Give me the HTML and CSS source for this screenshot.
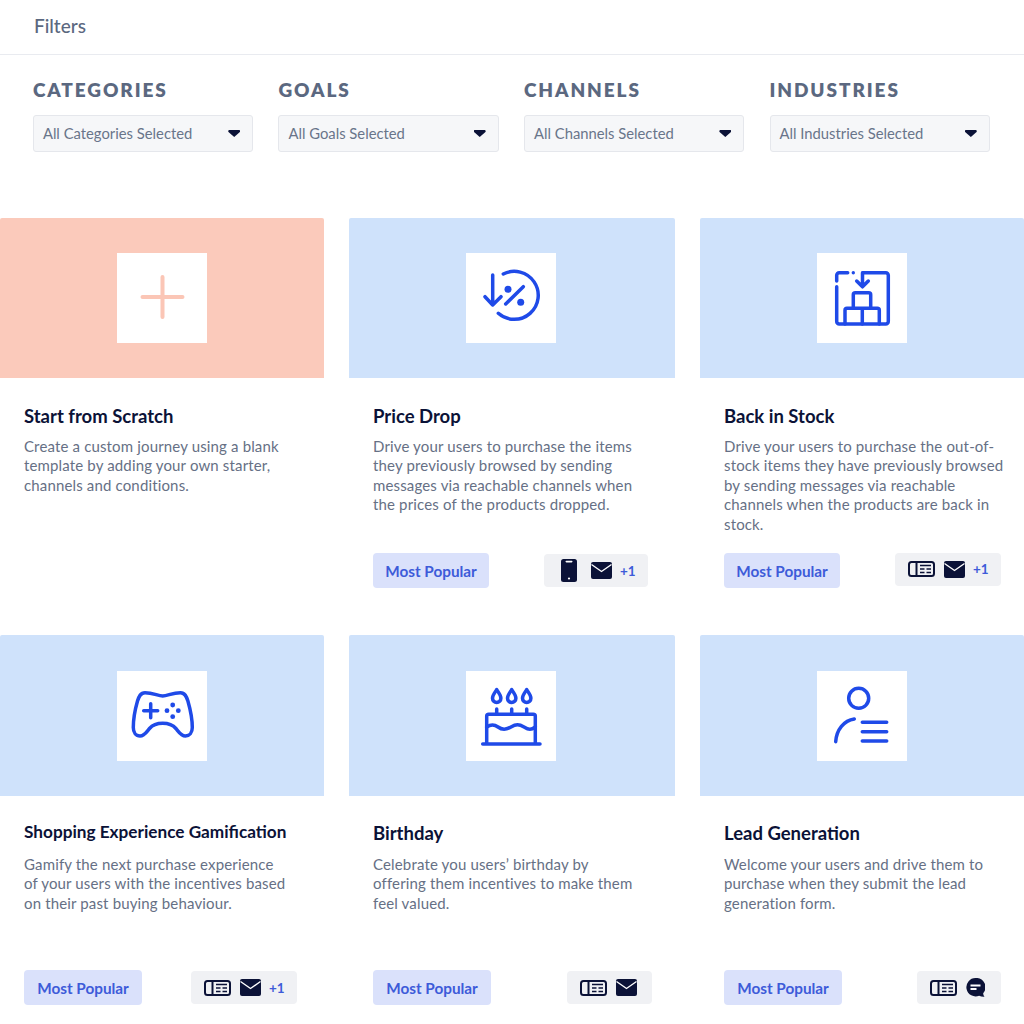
FILE: index.html
```html
<!DOCTYPE html>
<html lang="en">
<head>
<meta charset="utf-8">
<title>Filters</title>
<link rel="stylesheet" href="styles.css">
</head>
<body>
<svg class="defs" aria-hidden="true">
  <symbol id="journal" viewBox="0 0 27 16">
    <rect x="1" y="1" width="25" height="14" rx="2.500" fill="none" stroke="#0b1237" stroke-width="2"/>
    <path d="M8.500 1v14" stroke="#0b1237" stroke-width="2"/>
    <path d="M12 4.500h11M12 8h4.500M18.500 8h4.500M12 11.500h4.500M18.500 11.500h4.500" stroke="#0b1237" stroke-width="1.700"/>
  </symbol>
  <symbol id="mail" viewBox="0 0 21 17">
    <rect width="21" height="17" rx="2" fill="#0b1237"/>
    <path d="M0.500 2.500 10.500 9.500 20.500 2.500" fill="none" stroke="#fff" stroke-width="1.400"/>
  </symbol>
  <symbol id="phone" viewBox="0 0 16 23">
    <rect width="16" height="23" rx="2.500" fill="#0b1237"/>
    <rect x="4.500" y="1.800" width="7" height="1.600" rx="0.800" fill="#fff"/>
    <circle cx="8" cy="19.500" r="1.100" fill="#fff"/>
  </symbol>
  <symbol id="chat" viewBox="0 0 19 19">
    <path d="M9.500 0a9.200 9.200 0 1 0 3.600 17.700q2.600 1.100 5.400 0.900-1.400-1.500-1.300-3.400A9.200 9.200 0 0 0 9.500 0Z" fill="#0b1237"/>
    <path d="M4.500 7.500h10M4.500 11h6" stroke="#fff" stroke-width="2"/>
  </symbol>
</svg>

<header class="topbar">Filters</header>

<section class="filters">
  <div class="filter">
    <h2 class="filter-label">CATEGORIES</h2>
    <div class="select"><span>All Categories Selected</span><i class="caret"></i></div>
  </div>
  <div class="filter">
    <h2 class="filter-label">GOALS</h2>
    <div class="select"><span>All Goals Selected</span><i class="caret"></i></div>
  </div>
  <div class="filter">
    <h2 class="filter-label">CHANNELS</h2>
    <div class="select"><span>All Channels Selected</span><i class="caret"></i></div>
  </div>
  <div class="filter">
    <h2 class="filter-label">INDUSTRIES</h2>
    <div class="select"><span>All Industries Selected</span><i class="caret"></i></div>
  </div>
</section>

<main class="cards">
  <article class="card">
    <div class="banner banner-salmon">
      <div class="icon-box">
        <svg class="art art-salmon" viewBox="0 0 90 90"><path d="M45.500 24v40M25.500 44h40"/></svg>
      </div>
    </div>
    <div class="body">
      <h3 class="title">Start from Scratch</h3>
      <p class="desc">Create a custom journey using a blank<br>template by adding your own starter,<br>channels and conditions.</p>
    </div>
  </article>

  <article class="card">
    <div class="banner banner-mid">
      <div class="icon-box">
        <svg class="art" viewBox="0 0 90 90">
          <path d="M37.300 21A24 24 0 1 1 32.300 60.300"/>
          <path d="M26.700 22v30M19 43.700l7.700 8.300 8.300-8.300M39.700 51 57.300 33.700"/>
          <circle class="dot" cx="42" cy="36.300" r="3.500"/><circle class="dot" cx="54.700" cy="49.300" r="3.500"/>
        </svg>
      </div>
    </div>
    <div class="body body-wide">
      <h3 class="title">Price Drop</h3>
      <p class="desc">Drive your users to purchase the items<br>they previously browsed by sending<br>messages via reachable channels when<br>the prices of the products dropped.</p>
      <div class="foot">
        <span class="pill pill-narrow">Most Popular</span>
        <div class="chip">
          <svg class="ic ic-phone"><use href="#phone"/></svg>
          <svg class="ic ic-mail"><use href="#mail"/></svg>
          <span class="more">+1</span>
        </div>
      </div>
    </div>
  </article>

  <article class="card">
    <div class="banner">
      <div class="icon-box">
        <svg class="art" viewBox="0 0 90 90">
          <path d="M46 19.700H68.800a2.500 2.500 0 0 1 2.500 2.500V68.500a2.500 2.500 0 0 1-2.500 2.500H22.200a2.500 2.500 0 0 1-2.500-2.500V33.700M19.700 28V22.200a2.500 2.500 0 0 1 2.500-2.500H30.700"/>
          <path d="M45.500 19.700V33.700M39.700 28l5.800 5.800L51.300 28"/>
          <path d="M36.300 55.300V41.700a2 2 0 0 1 2-2H51.700a2 2 0 0 1 2 2V55.300M28 71V57.300a2 2 0 0 1 2-2H60.300a2 2 0 0 1 2 2V71M45.300 55.300V71"/>
          <circle class="dot" cx="36.300" cy="19.700" r="1.700"/>
        </svg>
      </div>
    </div>
    <div class="body">
      <h3 class="title">Back in Stock</h3>
      <p class="desc">Drive your users to purchase the out-of-<br>stock items they have previously browsed<br>by sending messages via reachable<br>channels when the products are back in<br>stock.</p>
      <div class="foot">
        <span class="pill pill-narrow">Most Popular</span>
        <div class="chip chip-raised">
          <svg class="ic ic-journal"><use href="#journal"/></svg>
          <svg class="ic ic-mail"><use href="#mail"/></svg>
          <span class="more">+1</span>
        </div>
      </div>
    </div>
  </article>

  <article class="card">
    <div class="banner banner-tall">
      <div class="icon-box">
        <svg class="art" viewBox="0 0 90 90">
          <path d="M45.700 25C41 25 36 21.700 28 21.700C23.500 21.700 22 25 20.500 30C18.500 37 16.300 47 16.300 56.500C16.300 61.500 19 65 23 65C27.500 65 29.500 61 32.500 57.500C35.500 54 39 52.300 45.700 52.300C52.400 52.300 55.900 54 58.900 57.500C61.900 61 63.900 65 68.400 65C72.400 65 75.300 61.500 75.300 56.500C75.300 47 72.900 37 70.900 30C69.400 25 67.900 21.700 63.400 21.700C55.400 21.700 50.400 25 45.700 25Z"/>
          <path d="M33.700 32.700V46.700M26.700 39.700H40.700"/>
          <circle class="dot" cx="55.700" cy="34" r="2.400"/><circle class="dot" cx="61.300" cy="39.700" r="2.400"/><circle class="dot" cx="55.700" cy="45.700" r="2.400"/><circle class="dot" cx="50" cy="39.700" r="2.400"/>
        </svg>
      </div>
    </div>
    <div class="body body-wide body-tighter">
      <h3 class="title title-small">Shopping Experience Gamification</h3>
      <p class="desc desc-lowest">Gamify the next purchase experience<br>of your users with the incentives based<br>on their past buying behaviour.</p>
      <div class="foot">
        <span class="pill">Most Popular</span>
        <div class="chip">
          <svg class="ic ic-journal"><use href="#journal"/></svg>
          <svg class="ic ic-mail"><use href="#mail"/></svg>
          <span class="more">+1</span>
        </div>
      </div>
    </div>
  </article>

  <article class="card">
    <div class="banner banner-tall banner-mid">
      <div class="icon-box">
        <svg class="art" viewBox="0 0 90 90">
          <path d="M16.700 73H74M20.700 73V45.300a2 2 0 0 1 2-2H67.300a2 2 0 0 1 2 2V73"/>
          <path d="M20.700 56C25 53 28 53 32 56S40 59 45 56 53 53 58 56 65 59 69.300 56"/>
          <path d="M30.700 38V43.300M45.700 38V43.300M60.700 38V43.300"/>
          <path d="M30.700 18.500C29 21.500 26.500 24 26.500 27.300A4.200 4.200 0 0 0 34.900 27.300C34.900 24 32.400 21.500 30.700 18.500Z"/>
          <path d="M45.700 18.500C44 21.500 41.500 24 41.500 27.300A4.200 4.200 0 0 0 49.900 27.300C49.900 24 47.400 21.500 45.700 18.500Z"/>
          <path d="M60.700 18.500C59 21.500 56.500 24 56.500 27.300A4.200 4.200 0 0 0 64.900 27.300C64.900 24 62.400 21.500 60.700 18.500Z"/>
        </svg>
      </div>
    </div>
    <div class="body body-tight">
      <h3 class="title">Birthday</h3>
      <p class="desc desc-low">Celebrate you users’ birthday by<br>offering them incentives to make them<br>feel valued.</p>
      <div class="foot">
        <span class="pill">Most Popular</span>
        <div class="chip chip-bare">
          <svg class="ic ic-journal"><use href="#journal"/></svg>
          <svg class="ic ic-mail"><use href="#mail"/></svg>
        </div>
      </div>
    </div>
  </article>

  <article class="card">
    <div class="banner banner-tall">
      <div class="icon-box">
        <svg class="art" viewBox="0 0 90 90">
          <circle cx="41.700" cy="27.300" r="10"/>
          <path d="M37.300 48C27 49.500 19.500 58.500 18.700 70.700"/>
          <path d="M45.300 51.300H69.700M45.300 60.700H69.700M45.300 70H69.700"/>
        </svg>
      </div>
    </div>
    <div class="body body-tight">
      <h3 class="title">Lead Generation</h3>
      <p class="desc desc-low">Welcome your users and drive them to<br>purchase when they submit the lead<br>generation form.</p>
      <div class="foot">
        <span class="pill">Most Popular</span>
        <div class="chip chip-bare chip-chat">
          <svg class="ic ic-journal"><use href="#journal"/></svg>
          <svg class="ic ic-chat"><use href="#chat"/></svg>
        </div>
      </div>
    </div>
  </article>
</main>
</body>
</html>
```

FILE: styles.css
```css
* { box-sizing: border-box; }
html, body { margin: 0; padding: 0; }
body {
  width: 1024px;
  height: 1024px;
  overflow: hidden;
  background: #fff;
  font-family: "Lato", "Liberation Sans", sans-serif;
  color: #0b1237;
}
.defs { display: none; }

.topbar {
  height: 55px;
  padding: 14px 0 0 34px;
  border-bottom: 1px solid #e9ebf0;
  font-size: 19px;
  line-height: 24px;
  font-weight: 500;
  color: #5b6880;
}

.filters {
  display: grid;
  grid-template-columns: repeat(4, 220.300px);
  column-gap: 25.250px;
  padding: 22px 0 0 32.900px;
  height: 163px;
}
.filter-label {
  margin: 0 0 13px 0;
  font-size: 19px;
  line-height: 25px;
  font-weight: 800;
  letter-spacing: 1.900px;
  color: #5b6880;
}
.select {
  display: flex;
  justify-content: space-between;
  align-items: center;
  height: 37px;
  padding: 0 12px 2px 9px;
  background: #f6f7f9;
  border: 1px solid #e5e7ec;
  border-radius: 3px;
  font-size: 14.800px;
  color: #69758a;
}
.caret {
  width: 12px;
  height: 7px;
  margin-top: 2px;
  background: #0b1237;
  clip-path: polygon(4% 0, 96% 0, 100% 25%, 50% 100%, 0 25%);
}

.cards {
  display: grid;
  grid-template-columns: 324px 326px 324px;
  grid-auto-rows: 389px;
  column-gap: 25px;
  row-gap: 28px;
}
.card { display: flex; flex-direction: column; min-width: 0; }
.banner {
  flex: none;
  height: 160px;
  display: flex;
  align-items: center;
  justify-content: center;
  background: #cfe2fb;
  border-radius: 2px 2px 0 0;
}
.banner-tall { height: 161px; }
.banner-mid { padding-right: 2px; }
.banner-salmon { background: #fbcabb; }
.icon-box { width: 90px; height: 90px; background: #fff; }
.art {
  display: block;
  width: 90px;
  height: 90px;
  fill: none;
  stroke: #1f4ae8;
  stroke-width: 3.500;
  stroke-linecap: round;
  stroke-linejoin: round;
}
.art-salmon { stroke: #fbc6b6; stroke-width: 4; }
.art .dot { fill: #1f4ae8; stroke: none; }

.body {
  flex: 1;
  display: flex;
  flex-direction: column;
  min-height: 0;
  padding: 27px 23px 19px 24px;
}
.body-wide { padding-right: 27px; }
.body-tight { padding-top: 26px; }
.body-tighter { padding-top: 25px; }
.title {
  margin: 0;
  font-size: 18.500px;
  line-height: 22px;
  font-weight: 700;
  color: #0b1237;
}
.title-small { font-size: 17.200px; }
.desc {
  margin: 10px 0 0;
  font-size: 15px;
  line-height: 19.400px;
  letter-spacing: 0.150px;
  white-space: nowrap;
  color: #667085;
}
.desc-low { margin-top: 11px; }
.desc-lowest { margin-top: 12px; }
.foot {
  margin-top: auto;
  display: flex;
  justify-content: space-between;
  align-items: center;
}
.pill {
  display: flex;
  align-items: center;
  justify-content: center;
  width: 118px;
  height: 35px;
  background: #dae1fb;
  border-radius: 4px;
  font-size: 15.300px;
  font-weight: 700;
  color: #3d5bd9;
}
.pill-narrow { width: 116px; }
.chip {
  display: flex;
  align-items: center;
  height: 33px;
  padding: 0 13px;
  background: #f0f1f4;
  border-radius: 4px;
}
.chip-bare { padding-right: 15px; }
.chip-chat { padding-right: 16px; }
.chip-raised { margin-top: -3px; }
.ic { display: block; flex: none; }
.ic-phone { width: 16px; height: 23px; margin: 0 14px 0 4px; }
.ic-mail { width: 21px; height: 17px; }
.ic-journal { width: 27px; height: 16px; margin-right: 9px; }
.ic-chat { width: 19px; height: 19px; }
.more {
  margin-left: 8px;
  width: 15px;
  font-size: 13.500px;
  font-weight: 700;
  color: #3d5bd9;
}
```
